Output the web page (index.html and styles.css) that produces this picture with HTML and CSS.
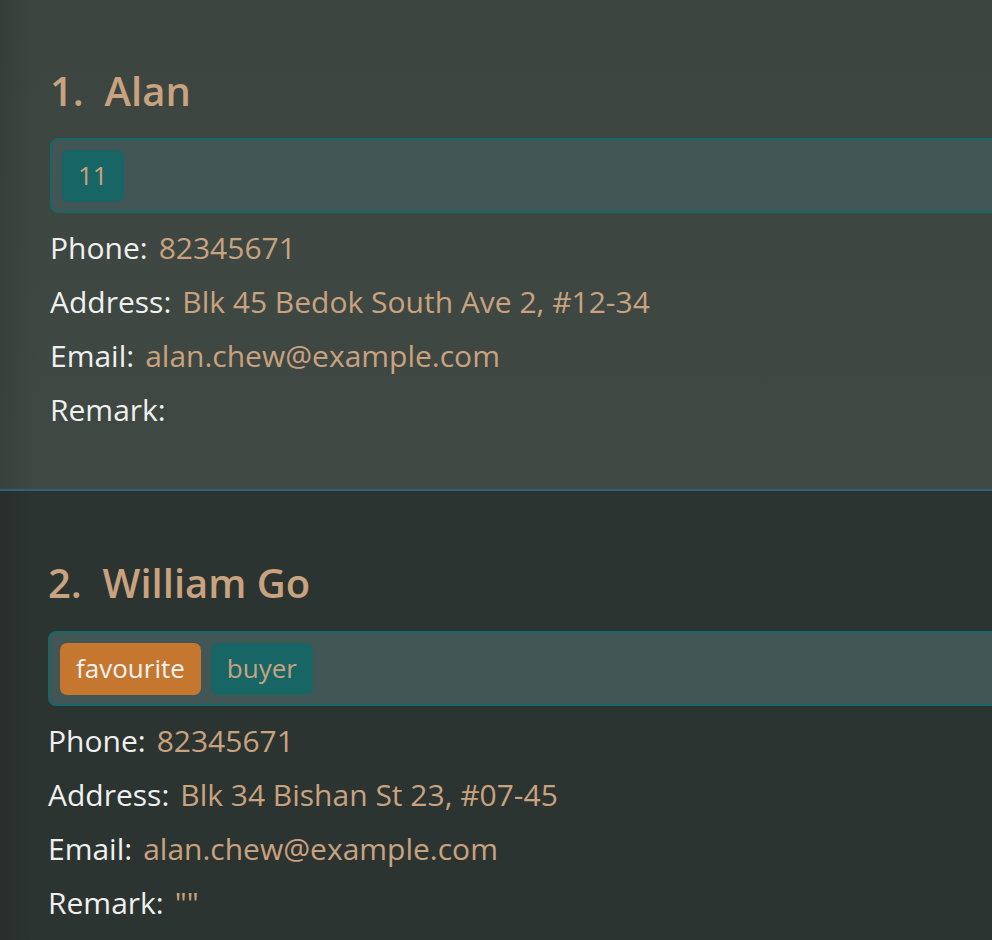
FILE: index.html
```
<!DOCTYPE html>
<html>
<head>
<meta charset="utf-8">
<link rel="stylesheet" href="styles.css">
</head>
<body>
<div class="list">
  <div class="card card-selected">
    <div class="name">1.&nbsp; Alan</div>
    <div class="tags">
      <span class="tag">11</span>
    </div>
    <div class="row"><span class="label">Phone:</span><span class="value">82345671</span></div>
    <div class="row"><span class="label">Address:</span><span class="value">Blk 45 Bedok South Ave 2, #12-34</span></div>
    <div class="row"><span class="label">Email:</span><span class="value">alan.chew@example.com</span></div>
    <div class="row"><span class="label">Remark:</span><span class="value"></span></div>
  </div>
  <div class="card card-plain">
    <div class="name">2.&nbsp; William Go</div>
    <div class="tags">
      <span class="tag tag-fav">favourite</span>
      <span class="tag">buyer</span>
    </div>
    <div class="row"><span class="label">Phone:</span><span class="value">82345671</span></div>
    <div class="row"><span class="label">Address:</span><span class="value">Blk 34 Bishan St 23, #07-45</span></div>
    <div class="row"><span class="label">Email:</span><span class="value">alan.chew@example.com</span></div>
    <div class="row"><span class="label">Remark:</span><span class="value">""</span></div>
  </div>
</div>
</body>
</html>
```
FILE: styles.css
```
html, body {
  margin: 0;
  padding: 0;
  height: 100%;
  overflow: hidden;
  background: #2c3431;
}
body {
  font-family: "Open Sans", "Noto Sans", sans-serif;
}
.list {
  display: flex;
  flex-direction: column;
}
.card {
  display: flex;
  flex-direction: column;
  align-items: flex-start;
  padding-top: 66px;
  padding-bottom: 52px;
  overflow: hidden;
  flex-shrink: 0;
}
.card-selected {
  padding-left: 50px;
  background:
    linear-gradient(to right, rgba(0,0,0,0.10), rgba(0,0,0,0) 35px),
    linear-gradient(to bottom, #3c4540, #3f4843);
  border-bottom: 2px solid #2b6275;
}
.card-plain {
  padding-top: 67px;
  padding-left: 48px;
  background:
    linear-gradient(to right, rgba(0,0,0,0.10), rgba(0,0,0,0) 35px),
    #2c3431;
}
.card-plain .tags {
  margin-top: 23px;
}
.name {
  font-size: 40px;
  font-weight: 600;
  line-height: 50px;
  color: #c9a27f;
  white-space: pre;
}
.tags {
  box-sizing: border-box;
  margin-top: 22px;
  margin-bottom: 8px;
  align-self: stretch;
  margin-right: -30px;
  height: 75px;
  border: 2px solid #176767;
  border-radius: 8px 0 0 8px;
  background: #425755;
  display: flex;
  align-items: flex-start;
  gap: 10px;
  padding: 10px;
  flex-shrink: 0;
}
.tag {
  height: 52px;
  padding: 0 16px;
  border-radius: 7px;
  background: #176565;
  color: #c9a27f;
  font-size: 26px;
  line-height: 51px;
}
.tag-fav {
  background: #c6772f;
  color: #f2f2f2;
}
.row {
  display: flex;
  gap: 11px;
  font-size: 30px;
  line-height: 54px;
  white-space: nowrap;
}
.label {
  color: #f0f0f0;
}
.value {
  color: #c9a27f;
}
```
